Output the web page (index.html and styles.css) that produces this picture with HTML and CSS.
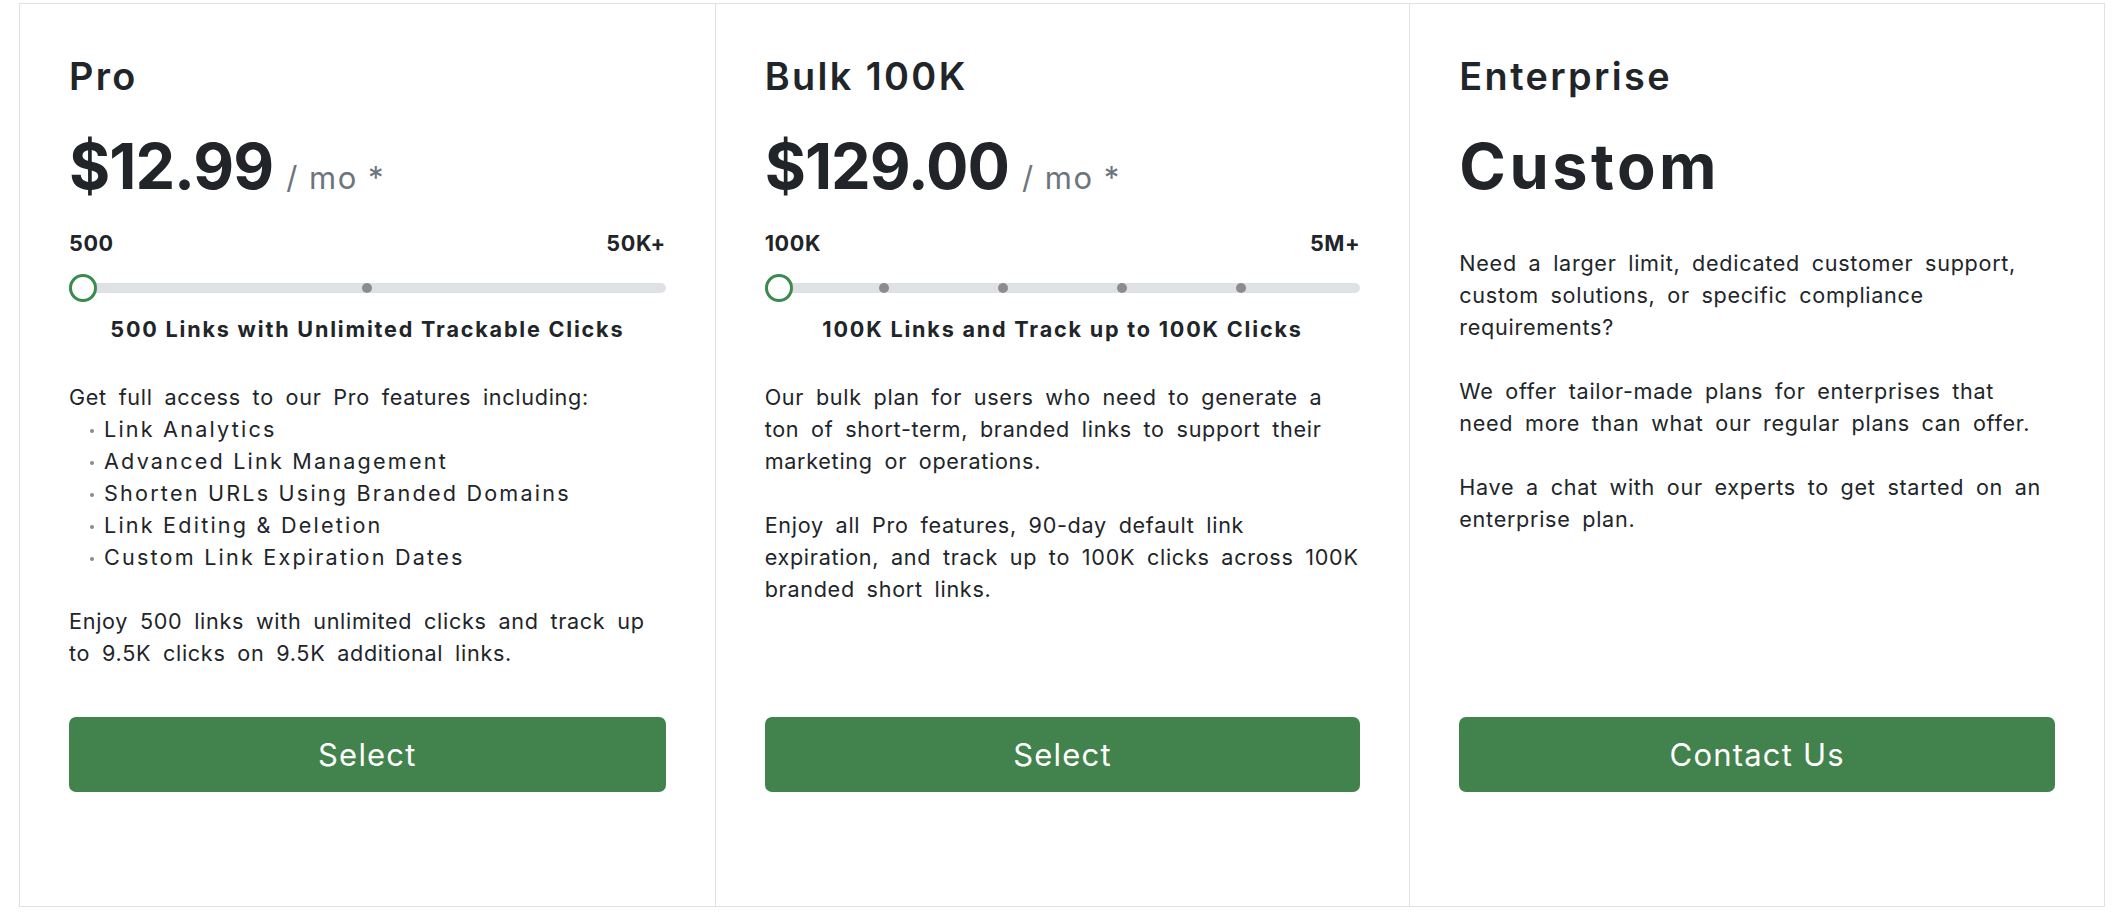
FILE: index.html
```html
<!DOCTYPE html>
<html lang="en">
<head>
<meta charset="utf-8">
<title>Plans</title>
<link rel="stylesheet" href="styles.css">
</head>
<body>
<div class="plans">
  <section class="plan">
    <h2 class="plan-name">Pro</h2>
    <div class="price"><span class="amount">$12.99</span><span class="per">/ mo *</span></div>
    <div class="range">
      <div class="range-labels"><span>500</span><span>50K+</span></div>
      <div class="track">
        <span class="tick" style="left:50%"></span>
        <span class="thumb"></span>
      </div>
      <p class="range-caption">500 Links with Unlimited Trackable Clicks</p>
    </div>
    <div class="desc">
      <p class="lead">Get full access to our Pro features including:</p>
      <ul class="features">
        <li>Link Analytics</li>
        <li>Advanced Link Management</li>
        <li>Shorten URLs Using Branded Domains</li>
        <li>Link Editing &amp; Deletion</li>
        <li>Custom Link Expiration Dates</li>
      </ul>
      <p>Enjoy 500 links with unlimited clicks and track up to 9.5K clicks on 9.5K additional links.</p>
    </div>
    <button class="btn">Select</button>
  </section>

  <section class="plan">
    <h2 class="plan-name">Bulk 100K</h2>
    <div class="price"><span class="amount">$129.00</span><span class="per">/ mo *</span></div>
    <div class="range">
      <div class="range-labels"><span>100K</span><span>5M+</span></div>
      <div class="track">
        <span class="tick" style="left:20%"></span>
        <span class="tick" style="left:40%"></span>
        <span class="tick" style="left:60%"></span>
        <span class="tick" style="left:80%"></span>
        <span class="thumb"></span>
      </div>
      <p class="range-caption">100K Links and Track up to 100K Clicks</p>
    </div>
    <div class="desc">
      <p>Our bulk plan for users who need to generate a ton of short-term, branded links to support their marketing or operations.</p>
      <p>Enjoy all Pro features, 90-day default link expiration, and track up to 100K clicks across 100K branded short links.</p>
    </div>
    <button class="btn">Select</button>
  </section>

  <section class="plan">
    <h2 class="plan-name">Enterprise</h2>
    <div class="price price-custom"><span class="amount amount-custom">Custom</span></div>
    <div class="desc">
      <p>Need a larger limit, dedicated customer support, custom solutions, or specific compliance requirements?</p>
      <p>We offer tailor-made plans for enterprises that need more than what our regular plans can offer.</p>
      <p>Have a chat with our experts to get started on an enterprise plan.</p>
    </div>
    <button class="btn">Contact Us</button>
  </section>
</div>
</body>
</html>
```

FILE: styles.css
```css
* { box-sizing: border-box; }

html, body {
  margin: 0;
  background: #ffffff;
}

body {
  padding: 3px 15px 0 19px;
  font-family: "Inter", "Noto Sans", sans-serif;
  color: #212529;
  font-size: 21.6px;
  line-height: 32px;
  letter-spacing: 1.4px;
}

.plans {
  display: grid;
  grid-template-columns: repeat(3, 1fr);
  border: 1px solid #dee2e6;
}

.plan {
  display: flex;
  flex-direction: column;
  padding: 50px 49px 114px 49px;
}

.plan + .plan {
  border-left: 1px solid #dee2e6;
}

.plan-name {
  margin: 0 0 29px 0;
  font-size: 37.8px;
  line-height: 45px;
  font-weight: 600;
  letter-spacing: 2.4px;
}

.price {
  display: flex;
  align-items: baseline;
  margin: 0 0 23px 0;
}

.amount {
  font-size: 63px;
  line-height: 76px;
  font-weight: 700;
  letter-spacing: -1px;
}

.amount-custom {
  letter-spacing: 3.5px;
}

.per {
  margin-left: 13px;
  font-size: 31px;
  color: #6c757d;
  letter-spacing: 1.5px;
}

.price-custom {
  margin-bottom: 43px;
}

.range-labels {
  display: flex;
  justify-content: space-between;
  font-weight: 700;
  letter-spacing: 0.6px;
}

.track {
  position: relative;
  height: 10px;
  margin: 24px 0 0 0;
  border-radius: 5px;
  background: #dee2e6;
}

.tick {
  position: absolute;
  top: 0;
  width: 10px;
  height: 10px;
  margin-left: -5px;
  border-radius: 50%;
  background: #8c8c8c;
}

.thumb {
  position: absolute;
  left: 0;
  top: -9px;
  width: 28px;
  height: 28px;
  border: 3px solid #3d8a4e;
  border-radius: 50%;
  background: #ffffff;
}

.range-caption {
  margin: 20px 0 36px 0;
  text-align: center;
  font-weight: 700;
  letter-spacing: 1.8px;
}

.desc {
  flex: 1;
  margin-bottom: 48px;
  letter-spacing: 0.7px;
  word-spacing: 5px;
}

.desc p {
  margin: 0 0 32px 0;
}

.desc p.lead {
  margin-bottom: 0;
}

.desc p:last-child {
  margin-bottom: 0;
}

.features {
  list-style: none;
  margin: 0 0 32px 0;
  padding: 0;
  letter-spacing: 2.2px;
  word-spacing: 0;
}

.features li::before {
  content: "";
  display: inline-block;
  width: 4px;
  height: 4px;
  margin: 0 10px 0 21px;
  border-radius: 50%;
  background: #8c8c8c;
  vertical-align: middle;
}

.btn {
  display: block;
  width: 100%;
  height: 75px;
  border: 0;
  border-radius: 7px;
  background: #42824c;
  color: #ffffff;
  font-family: inherit;
  font-size: 31px;
  font-weight: 400;
  letter-spacing: 1.2px;
  cursor: pointer;
}
```
